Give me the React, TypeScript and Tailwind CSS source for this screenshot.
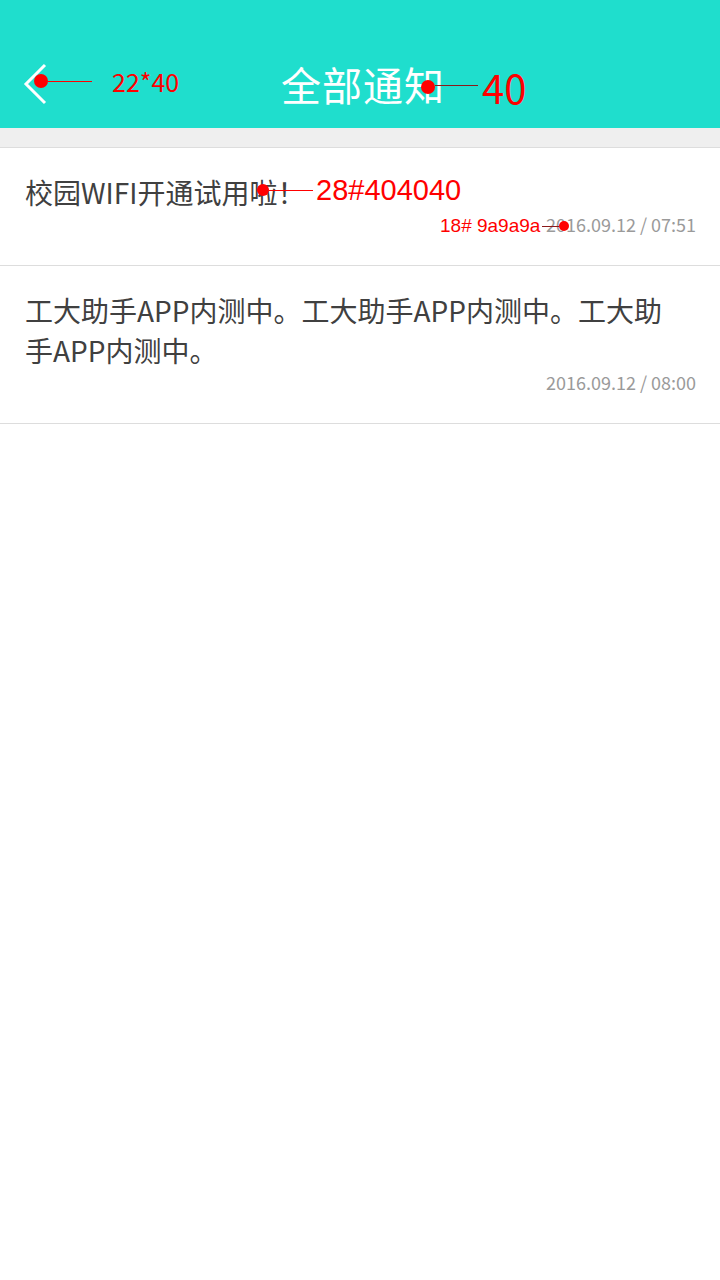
type Notice = {
  title: string;
  time: string;
};

const notices: Notice[] = [
  { title: "校园WIFI开通试用啦！", time: "2016.09.12 / 07:51" },
  {
    title: "工大助手APP内测中。工大助手APP内测中。工大助手APP内测中。",
    time: "2016.09.12 / 08:00",
  },
];

const Dot = ({ size }: { size: string }) => (
  <span className={"shrink-0 rounded-full bg-[#ff0000] " + size} />
);

const App = () => {
  return (
    <div
      className="relative w-[720px] h-[1280px] bg-white overflow-hidden"
      style={{ fontFamily: '"Noto Sans CJK SC", "Noto Sans", sans-serif' }}
    >
      {/* header */}
      <div className="h-[128px] bg-[#1fdecd] pt-[40px]">
        <div className="h-[88px] flex items-center pl-[22px]">
          <svg width="26" height="42" viewBox="0 0 26 42" className="shrink-0">
            <polyline points="23,2 4,21 23,40" fill="none" stroke="#fff" strokeWidth="3" />
          </svg>
          <span className="ml-[233px] text-[40px] leading-none tracking-[1px] text-white">全部通知</span>
        </div>
      </div>

      <div className="h-[20px] bg-[#efefef] border-b border-[#dddddd]" />

      {notices.map((n) => (
        <div key={n.time} className="pl-[25px] pr-[24px] pt-6 pb-[29px] border-b border-[#dddddd]">
          <p className="text-[28px] leading-[40px] text-[#404040] max-w-[650px]">{n.title}</p>
          <p className="text-right text-[18px] leading-6 text-[#9a9a9a]">{n.time}</p>
        </div>
      ))}

      {/* annotations */}
      <div className="absolute left-[34px] top-[81px] -translate-y-1/2 flex items-center">
        <Dot size="w-[14px] h-[14px]" />
        <span className="w-[44px] h-px bg-[#ff0000]" />
        <span className="ml-[20px] text-[25px] leading-[34px] text-[#ff0000]">22*40</span>
      </div>

      <div className="absolute left-[421px] top-[87px] -translate-y-1/2 flex items-center">
        <Dot size="w-[14px] h-[14px]" />
        <span className="w-[43px] h-px bg-[#8a1a1a] -translate-y-[2px]" />
        <span className="ml-[4px] text-[40px] leading-[50px] text-[#ff0000]">40</span>
      </div>

      <div
        className="absolute left-[257px] top-[190px] -translate-y-1/2 flex items-center"
        style={{ fontFamily: '"Liberation Sans", sans-serif' }}
      >
        <Dot size="w-[12px] h-[12px]" />
        <span className="w-[44px] h-px bg-[#ff0000]" />
        <span className="ml-[3px] text-[29px] leading-[34px] text-[#ff0000]">28#404040</span>
      </div>

      <div
        className="absolute left-[440px] top-[226px] -translate-y-1/2 flex items-center"
        style={{ fontFamily: '"Liberation Sans", sans-serif' }}
      >
        <span className="text-[19px] leading-[24px] text-[#ff0000]">18# 9a9a9a</span>
        <span className="ml-[2px] w-[17px] h-px bg-[#8a1a1a]" />
        <Dot size="w-[10px] h-[10px]" />
      </div>
    </div>
  );
};

export default App;
